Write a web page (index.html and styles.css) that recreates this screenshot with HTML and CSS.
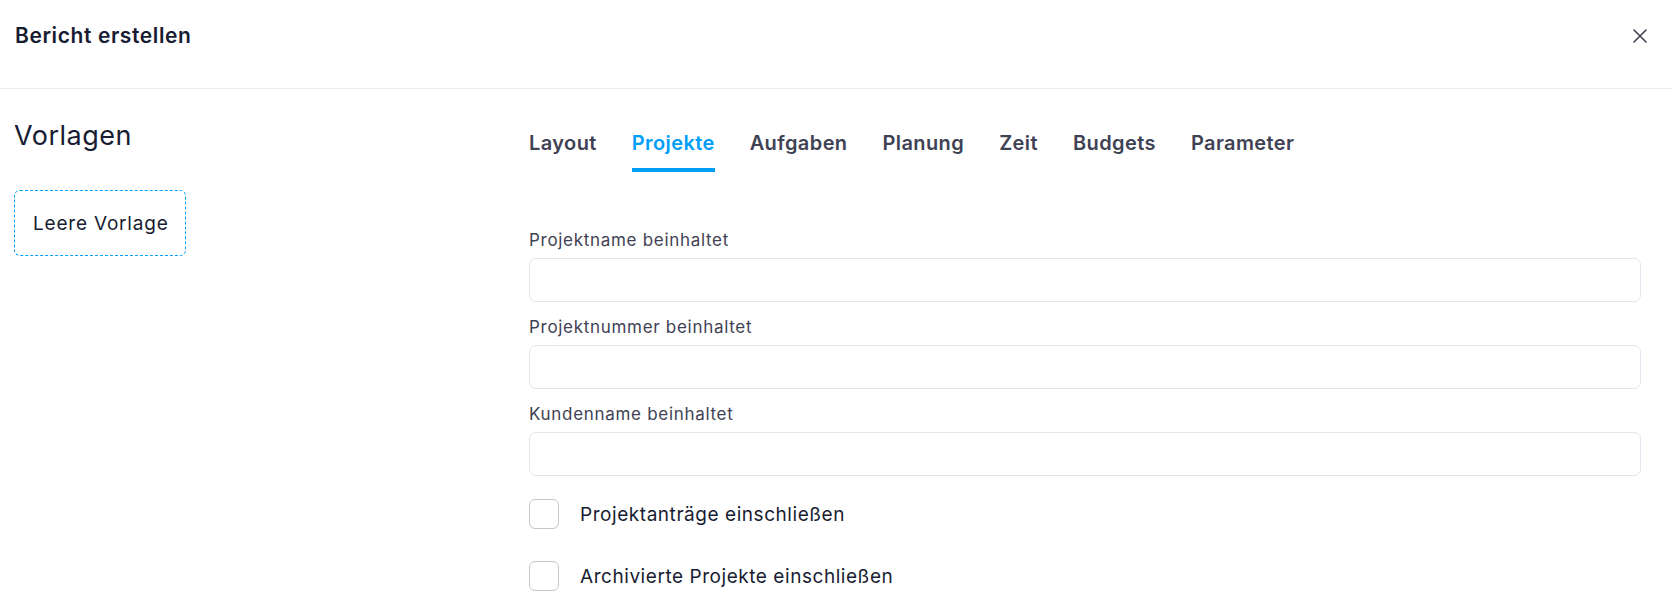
FILE: index.html
```html
<!DOCTYPE html>
<html lang="de">
<head>
    <meta charset="UTF-8">
    <meta name="viewport" content="width=device-width, initial-scale=1.0">
    <title>Bericht erstellen</title>
    <link rel="stylesheet" href="styles.css">
</head>
<body>

<div class="modal">
    <!-- Header -->
    <div class="modal-header">
        <h1 class="modal-title">Bericht erstellen</h1>
        <button class="close-btn" type="button" aria-label="Schließen">
            <svg width="14" height="14" viewBox="0 0 14 14" fill="none">
                <path d="M1 1L13 13M13 1L1 13" stroke="#3F4254" stroke-width="1.6" stroke-linecap="round"/>
            </svg>
        </button>
    </div>

    <div class="modal-body">
        <!-- Templates -->
        <div class="templates">
            <h2>Vorlagen</h2>
            <div class="template-card">Leere Vorlage</div>
        </div>

        <!-- Settings -->
        <div class="settings">
            <div class="tabs">
                <a class="tab">Layout</a>
                <a class="tab active">Projekte</a>
                <a class="tab">Aufgaben</a>
                <a class="tab">Planung</a>
                <a class="tab">Zeit</a>
                <a class="tab">Budgets</a>
                <a class="tab">Parameter</a>
            </div>

            <div class="form">
                <div class="field">
                    <label for="project-name">Projektname beinhaltet</label>
                    <input type="text" id="project-name">
                </div>
                <div class="field">
                    <label for="project-number">Projektnummer beinhaltet</label>
                    <input type="text" id="project-number">
                </div>
                <div class="field">
                    <label for="customer-name">Kundenname beinhaltet</label>
                    <input type="text" id="customer-name">
                </div>

                <label class="check-row first">
                    <input type="checkbox">
                    <span>Projektanträge einschließen</span>
                </label>
                <label class="check-row">
                    <input type="checkbox">
                    <span>Archivierte Projekte einschließen</span>
                </label>
            </div>
        </div>
    </div>
</div>

</body>
</html>
```

FILE: styles.css
```css
/* Global Styles */
body {
    font-family: 'Inter', 'Noto Sans', sans-serif;
    background-color: #FFFFFF;
    margin: 0;
    padding: 0;
    color: #181C32;
}

/* Header */
.modal-header {
    display: flex;
    justify-content: space-between;
    align-items: center;
    height: 72px;
    padding: 0 25px 16px 15px;
    border-bottom: 1px solid #EBEDF2;
}
.modal-title {
    margin: 0;
    font-size: 21px;
    font-weight: 600;
    line-height: 24px;
    letter-spacing: 0.6px;
    color: #181C32;
}
.close-btn {
    border: none;
    background: none;
    padding: 0;
    width: 14px;
    height: 14px;
    display: flex;
    cursor: pointer;
}

/* Body */
.modal-body {
    display: flex;
    padding: 0 31px 0 14px;
}
.templates {
    width: 515px;
    flex-shrink: 0;
}
.templates h2 {
    margin: 29px 0 36px;
    font-size: 27px;
    font-weight: 400;
    line-height: 36px;
    letter-spacing: 0.5px;
    color: #181C32;
}
.template-card {
    box-sizing: border-box;
    width: 172px;
    height: 66px;
    display: flex;
    align-items: center;
    padding-left: 18px;
    border: 1px dashed #009EF7;
    border-radius: 6px;
    font-size: 19px;
    letter-spacing: 0.8px;
    color: #181C32;
}

.settings {
    flex: 1;
}

/* Tabs */
.tabs {
    display: flex;
    gap: 35px;
    margin-top: 42px;
}
.tab {
    font-size: 20px;
    font-weight: 600;
    line-height: 24px;
    letter-spacing: 0.4px;
    color: #3F4254;
    padding-bottom: 13px;
    border-bottom: 4px solid transparent;
    cursor: pointer;
}
.tab.active {
    color: #009EF7;
    border-bottom-color: #009EF7;
}

/* Form */
.form {
    margin-top: 56px;
}
.field {
    margin-bottom: 13px;
}
.field label {
    display: block;
    font-size: 17px;
    line-height: 24px;
    letter-spacing: 0.7px;
    color: #3F4254;
    margin-bottom: 6px;
}
.field input {
    box-sizing: border-box;
    width: 100%;
    height: 44px;
    border: 1px solid #E4E6EF;
    border-radius: 7px;
    padding: 0 14px;
    font-family: inherit;
    font-size: 16px;
    outline: none;
}

.check-row {
    display: flex;
    align-items: center;
    gap: 21px;
    margin-top: 32px;
    font-size: 19px;
    letter-spacing: 0.55px;
    color: #181C32;
    cursor: pointer;
}
.check-row.first {
    margin-top: 23px;
}
.check-row input {
    appearance: none;
    margin: 0;
    width: 30px;
    height: 30px;
    border: 1px solid #C6C6CA;
    border-radius: 6px;
    background: #FFF;
}
```
